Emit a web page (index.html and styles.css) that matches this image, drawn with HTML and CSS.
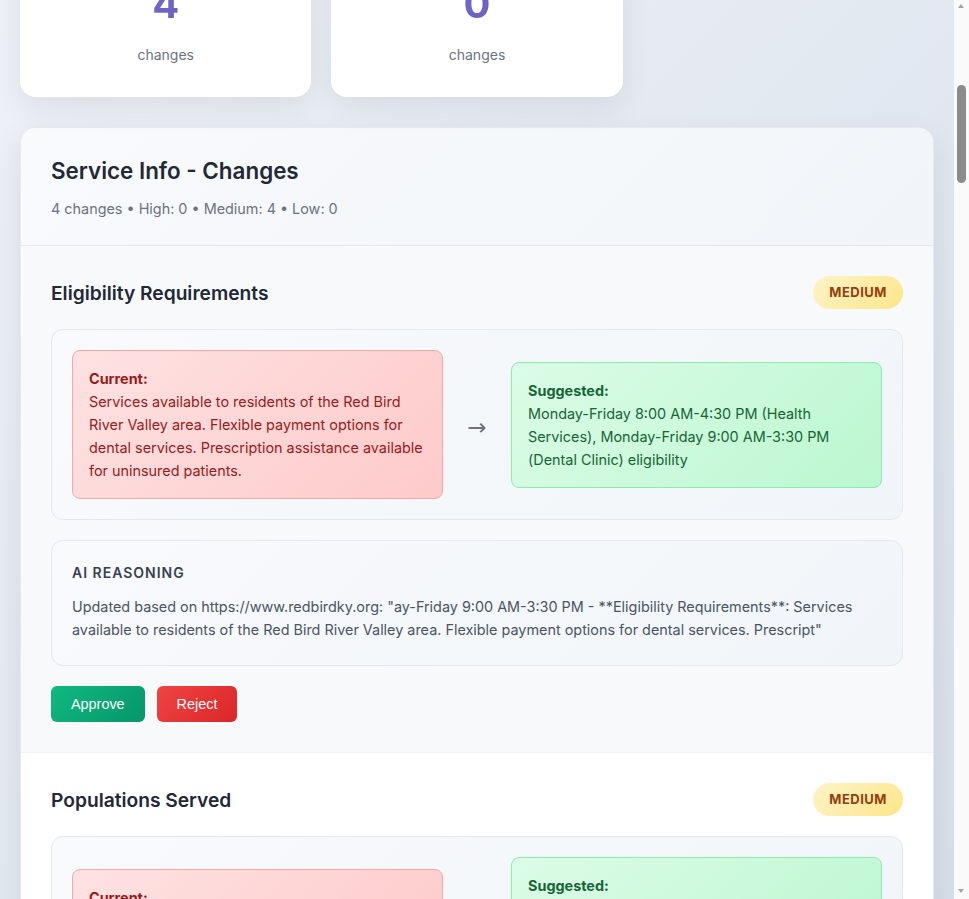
FILE: index.html
```html
<!DOCTYPE html>
<html lang="en">
<head>
<meta charset="utf-8">
<title>Change Review</title>
<link rel="stylesheet" href="styles.css">
</head>
<body>
<div class="container">
  <header class="page-header">
    <h1 class="page-title">Change Review Dashboard</h1>
    <p class="page-subtitle">Review AI-suggested updates before they are published to the directory.</p>
    <div class="chip-row">
      <span class="chip">Red Bird Mission</span>
      <span class="chip">Last crawl: today</span>
      <span class="chip">Source: redbirdky.org</span>
    </div>
  </header>

  <section class="info-card">
    <h2 class="info-title">Organization</h2>
    <div class="info-grid">
      <div class="info-field"><span class="info-label">Name</span><span class="info-value">Red Bird Mission Health Services</span></div>
      <div class="info-field"><span class="info-label">Website</span><span class="info-value">https://www.redbirdky.org</span></div>
      <div class="info-field"><span class="info-label">Location</span><span class="info-value">Beverly, Kentucky</span></div>
      <div class="info-field"><span class="info-label">Phone</span><span class="info-value">(606) 598-5175</span></div>
    </div>
  </section>

  <div class="stats-grid">
    <div class="stat-card">
      <h3 class="stat-title">Service Info</h3>
      <div class="stat-number">4</div>
      <div class="stat-label">changes</div>
    </div>
    <div class="stat-card">
      <h3 class="stat-title">Location Info</h3>
      <div class="stat-number">0</div>
      <div class="stat-label">changes</div>
    </div>
  </div>

  <section class="section js-anchor">
    <div class="section-header">
      <h2 class="section-title">Service Info - Changes</h2>
      <p class="section-meta">4 changes • High: 0 • Medium: 4 • Low: 0</p>
    </div>

    <div class="change-item is-active">
      <div class="change-header">
        <h3 class="change-title">Eligibility Requirements</h3>
        <span class="badge badge-medium">Medium</span>
      </div>
      <div class="comparison">
        <div class="value-box value-current"><strong>Current:</strong><br>Services available to residents of the Red Bird River Valley area. Flexible payment options for dental services. Prescription assistance available for uninsured patients.</div>
        <div class="arrow">→</div>
        <div class="value-box value-suggested"><strong>Suggested:</strong><br>Monday-Friday 8:00 AM-4:30 PM (Health Services), Monday-Friday 9:00 AM-3:30 PM (Dental Clinic) eligibility</div>
      </div>
      <div class="reasoning">
        <h4 class="reasoning-title">AI Reasoning</h4>
        <p class="reasoning-text">Updated based on https://www.redbirdky.org: "ay-Friday 9:00 AM-3:30 PM - **Eligibility Requirements**: Services available to residents of the Red Bird River Valley area. Flexible payment options for dental services. Prescript"</p>
      </div>
      <div class="actions">
        <button class="btn btn-approve" type="button">Approve</button>
        <button class="btn btn-reject" type="button">Reject</button>
      </div>
    </div>

    <div class="change-item">
      <div class="change-header">
        <h3 class="change-title">Populations Served</h3>
        <span class="badge badge-medium">Medium</span>
      </div>
      <div class="comparison">
        <div class="value-box value-current"><strong>Current:</strong><br>Residents of the Red Bird River Valley, including children, adults and seniors.</div>
        <div class="arrow">→</div>
        <div class="value-box value-suggested"><strong>Suggested:</strong><br>Children, adults, and seniors in Clay, Leslie, and Bell counties, including low-income and uninsured families seeking care.</div>
      </div>
      <div class="reasoning">
        <h4 class="reasoning-title">AI Reasoning</h4>
        <p class="reasoning-text">Updated based on https://www.redbirdky.org: "**Populations Served**: Children, adults, and seniors in Clay, Leslie, and Bell counties, including low-income and uninsured families"</p>
      </div>
      <div class="actions">
        <button class="btn btn-approve" type="button">Approve</button>
        <button class="btn btn-reject" type="button">Reject</button>
      </div>
    </div>

    <div class="change-item">
      <div class="change-header">
        <h3 class="change-title">Application Process</h3>
        <span class="badge badge-medium">Medium</span>
      </div>
      <div class="comparison">
        <div class="value-box value-current"><strong>Current:</strong><br>Call the clinic to schedule an appointment. Walk-ins accepted when available.</div>
        <div class="arrow">→</div>
        <div class="value-box value-suggested"><strong>Suggested:</strong><br>Call (606) 598-5175 to schedule an appointment. New patients should bring photo ID and proof of income to the first visit.</div>
      </div>
      <div class="reasoning">
        <h4 class="reasoning-title">AI Reasoning</h4>
        <p class="reasoning-text">Updated based on https://www.redbirdky.org: "**Application Process**: Call (606) 598-5175 to schedule an appointment. New patients should bring photo ID and proof of income"</p>
      </div>
      <div class="actions">
        <button class="btn btn-approve" type="button">Approve</button>
        <button class="btn btn-reject" type="button">Reject</button>
      </div>
    </div>

    <div class="change-item">
      <div class="change-header">
        <h3 class="change-title">Fees</h3>
        <span class="badge badge-medium">Medium</span>
      </div>
      <div class="comparison">
        <div class="value-box value-current"><strong>Current:</strong><br>Sliding fee scale based on household income.</div>
        <div class="arrow">→</div>
        <div class="value-box value-suggested"><strong>Suggested:</strong><br>Sliding fee scale based on household income and size. Most insurance, Medicaid and Medicare accepted.</div>
      </div>
      <div class="reasoning">
        <h4 class="reasoning-title">AI Reasoning</h4>
        <p class="reasoning-text">Updated based on https://www.redbirdky.org: "**Fees**: Sliding fee scale based on household income and size. Most insurance, Medicaid and Medicare accepted."</p>
      </div>
      <div class="actions">
        <button class="btn btn-approve" type="button">Approve</button>
        <button class="btn btn-reject" type="button">Reject</button>
      </div>
    </div>
  </section>

  <section class="section">
    <div class="section-header">
      <h2 class="section-title">Location Info - Changes</h2>
      <p class="section-meta">0 changes • High: 0 • Medium: 0 • Low: 0</p>
    </div>
    <div class="empty-state">No changes detected for this section.</div>
  </section>
</div>

<div class="scrollbar" aria-hidden="true">
  <span class="scroll-arrow scroll-arrow-up"></span>
  <span class="scroll-thumb"></span>
  <span class="scroll-arrow scroll-arrow-down"></span>
</div>
<script src="script.js"></script>
</body>
</html>
```

FILE: styles.css
```css
* {
  box-sizing: border-box;
}

body {
  margin: 0;
  padding-right: 15px;
  min-height: 100vh;
  font-family: Inter, "Noto Sans", sans-serif;
  color: #1f2937;
  background: linear-gradient(135deg, #f5f7fa 0%, #c3cfe2 100%);
}

.container {
  padding: 20px;
}

.page-header,
.info-card {
  background: #fff;
  border-radius: 16px;
  padding: 30px;
  margin-bottom: 30px;
  box-shadow: 0 10px 30px rgba(0, 0, 0, 0.08);
}

.page-title {
  margin: 0;
  font-size: 28px;
  line-height: 36px;
  font-weight: 700;
}

.page-subtitle {
  margin: 8px 0 0;
  font-size: 15px;
  line-height: 24px;
  color: #6b7280;
}

.chip-row {
  display: flex;
  gap: 10px;
  margin-top: 20px;
}

.chip {
  padding: 6px 14px;
  border-radius: 20px;
  background: #eef2ff;
  color: #4f46e5;
  font-size: 13px;
  line-height: 18px;
}

.info-title {
  margin: 0 0 20px;
  font-size: 20px;
  line-height: 26px;
  font-weight: 600;
}

.info-grid {
  display: grid;
  grid-template-columns: 1fr 1fr;
  gap: 16px 30px;
}

.info-field {
  display: flex;
  flex-direction: column;
  gap: 4px;
}

.info-label {
  font-size: 12px;
  line-height: 16px;
  color: #6b7280;
  text-transform: uppercase;
  letter-spacing: 0.5px;
}

.info-value {
  font-size: 15px;
  line-height: 22px;
  color: #1f2937;
}

.stats-grid {
  display: grid;
  grid-template-columns: repeat(auto-fill, minmax(250px, 1fr));
  gap: 20px;
  margin-bottom: 30px;
}

.stat-card {
  background: #fff;
  border-radius: 16px;
  padding: 25px 25px 32px;
  text-align: center;
  box-shadow: 0 10px 30px rgba(0, 0, 0, 0.08);
}

.stat-title {
  margin: 0 0 10px;
  font-size: 16px;
  line-height: 24px;
  font-weight: 600;
  color: #374151;
}

.stat-number {
  margin-bottom: 17px;
  font-size: 40px;
  line-height: 48px;
  font-weight: 700;
  background: linear-gradient(135deg, #667eea, #764ba2);
  -webkit-background-clip: text;
  background-clip: text;
  color: transparent;
}

.stat-label {
  font-size: 14px;
  line-height: 20px;
  color: #6b7280;
}

.section {
  background: #fff;
  border: 1px solid #e6eaf0;
  border-radius: 16px;
  overflow: hidden;
  margin-bottom: 30px;
  box-shadow: 0 10px 30px rgba(0, 0, 0, 0.09);
}

.section-header {
  padding: 29px 30px 26px;
  background: linear-gradient(135deg, #f8fafc, #f1f5f9);
  border-bottom: 1px solid #e5e7eb;
}

.section-title {
  margin: 0;
  font-size: 22.4px;
  line-height: 28px;
  font-weight: 600;
  color: #1f2937;
}

.section-meta {
  margin: 14px 0 0;
  font-size: 14.4px;
  line-height: 20px;
  color: #6b7280;
}

.change-item {
  padding: 30px;
  border-bottom: 1px solid #f0f2f5;
}

.change-item.is-active {
  background: #f8f9fb;
}

.change-item:last-child {
  border-bottom: 0;
}

.change-header {
  display: flex;
  justify-content: space-between;
  align-items: center;
  margin-bottom: 20px;
}

.change-title {
  margin: 0;
  font-size: 19.2px;
  line-height: 22px;
  font-weight: 600;
  color: #1f2937;
}

.badge {
  padding: 8px 16px;
  border-radius: 20px;
  font-size: 13px;
  line-height: 17px;
  font-weight: 700;
  letter-spacing: 0.5px;
  text-transform: uppercase;
}

.badge-medium {
  background: linear-gradient(135deg, #fef3c7, #fde68a);
  color: #92400e;
}

.comparison {
  display: grid;
  grid-template-columns: 1fr 28px 1fr;
  gap: 20px;
  align-items: center;
  padding: 20px;
  background: linear-gradient(135deg, #f8fafc, #f1f5f9);
  border: 1px solid #e2e8f0;
  border-radius: 12px;
}

.value-box {
  padding: 16px;
  border-radius: 8px;
  font-size: 14.4px;
  line-height: 1.6;
}

.value-current {
  background: linear-gradient(135deg, #fee2e2, #fecaca);
  border: 1px solid #fca5a5;
  color: #991b1b;
}

.value-suggested {
  background: linear-gradient(135deg, #dcfce7, #bbf7d0);
  border: 1px solid #86efac;
  color: #166534;
}

.arrow {
  text-align: center;
  font-family: "DejaVu Sans", sans-serif;
  font-size: 23px;
  line-height: 28px;
  color: #6b7280;
  padding-top: 4px;
}

.reasoning {
  margin-top: 20px;
  padding: 20px 20px 24px;
  background: linear-gradient(135deg, #f8fafc, #f1f5f9);
  border: 1px solid #e2e8f0;
  border-radius: 12px;
}

.reasoning-title {
  margin: 0 0 10px;
  font-size: 14px;
  line-height: 24px;
  font-weight: 600;
  letter-spacing: 1px;
  text-transform: uppercase;
  color: #374151;
}

.reasoning-text {
  margin: 0;
  font-size: 14.4px;
  line-height: 1.6;
  color: #4b5563;
}

.actions {
  display: flex;
  gap: 12px;
  margin-top: 20px;
}

.btn {
  border: 0;
  border-radius: 6px;
  padding: 10px 20px;
  font-family: "Liberation Sans", Arial, sans-serif;
  font-size: 14.4px;
  line-height: 16px;
  color: #fff;
  cursor: pointer;
}

.btn-approve {
  background: linear-gradient(135deg, #10b981, #059669);
}

.btn-reject {
  background: linear-gradient(135deg, #ef4444, #dc2626);
}

.empty-state {
  padding: 40px 30px;
  text-align: center;
  font-size: 15px;
  line-height: 22px;
  color: #6b7280;
}

/* classic scrollbar drawn over the right edge of the window */
.scrollbar {
  position: fixed;
  top: 0;
  right: 0;
  width: 15px;
  height: 100vh;
  background: #fafafa;
}

.scroll-arrow {
  position: absolute;
  left: 4px;
  width: 0;
  height: 0;
  border-left: 3.5px solid transparent;
  border-right: 3.5px solid transparent;
}

.scroll-arrow-up {
  top: 4px;
  border-bottom: 4px solid #a3a3a3;
}

.scroll-arrow-down {
  bottom: 6px;
  border-top: 4px solid #a3a3a3;
}

.scroll-thumb {
  position: absolute;
  top: 85px;
  left: 3px;
  width: 9px;
  height: 98px;
  border-radius: 5px;
  background: #8b8b8b;
}
```

FILE: script.js
```js
function alignView() {
  var anchor = document.querySelector('.js-anchor');
  if (!anchor) return;
  var top = anchor.getBoundingClientRect().top + window.scrollY;
  window.scrollTo(0, top - 127);
}
alignView();
window.addEventListener('load', alignView);
```
